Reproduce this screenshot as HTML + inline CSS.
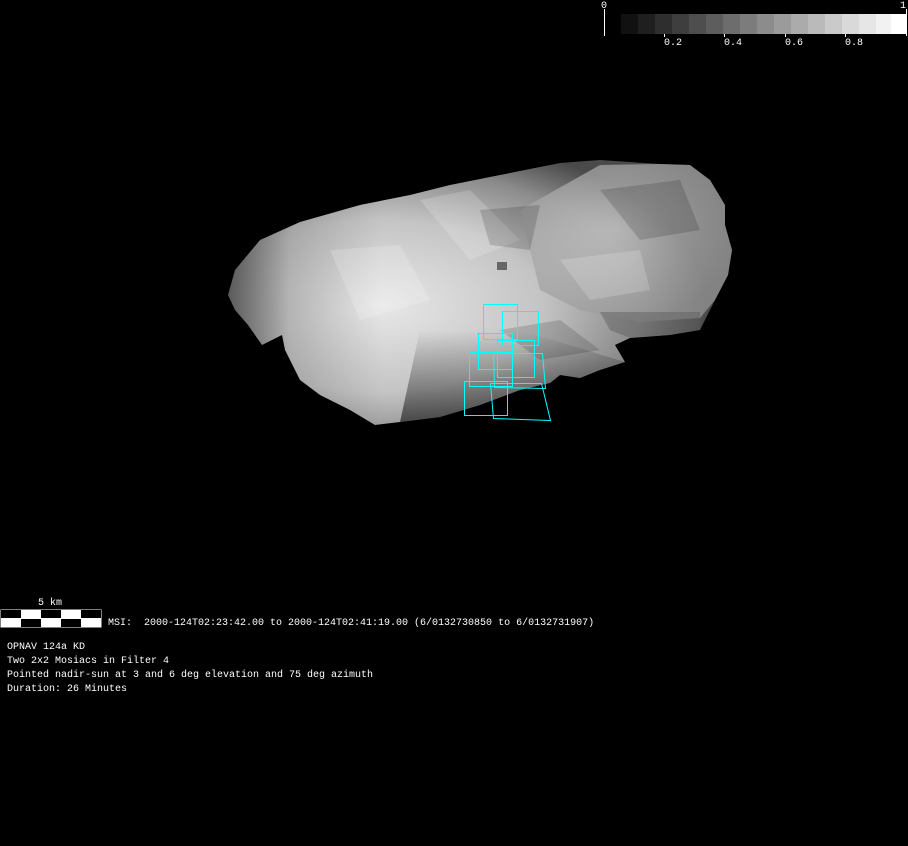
<!DOCTYPE html>
<html><head><style>
html,body{margin:0;padding:0;background:#000;width:908px;height:846px;overflow:hidden}
.t{position:absolute;color:#fff;font-family:"Liberation Mono",monospace;font-size:10px;line-height:14px;white-space:pre}
</style></head><body>
<svg width="908" height="846" style="position:absolute;left:0;top:0">
<defs>
<radialGradient id="g1" cx="0.3" cy="0.55" r="0.65">
<stop offset="0" stop-color="#e8e8e8"/><stop offset="0.5" stop-color="#c4c4c4"/><stop offset="0.8" stop-color="#8a8a8a"/><stop offset="1" stop-color="#4a4a4a"/>
</radialGradient>
<radialGradient id="g2" cx="0.45" cy="0.4" r="0.6">
<stop offset="0" stop-color="#cfcfcf"/><stop offset="0.7" stop-color="#a8a8a8"/><stop offset="1" stop-color="#9a9a9a"/>
</radialGradient>
<linearGradient id="g3" x1="0" y1="0" x2="0" y2="1">
<stop offset="0" stop-color="#000" stop-opacity="0"/><stop offset="1" stop-color="#000" stop-opacity="0.55"/>
</linearGradient>
<linearGradient id="g4" x1="0" y1="0" x2="1" y2="0">
<stop offset="0" stop-color="#000" stop-opacity="0.55"/><stop offset="0.12" stop-color="#000" stop-opacity="0.15"/><stop offset="0.3" stop-color="#000" stop-opacity="0"/>
</linearGradient>
</defs>
<polygon fill="url(#g1)" points="235,270 260,240 300,222 360,205 410,195 450,185 500,175 560,163 600,160 660,164 690,165 710,180 725,205 725,225 732,250 728,275 715,300 700,330 670,335 630,338 615,345 625,362 600,370 580,378 560,375 550,383 520,390 480,405 440,417 400,422 375,425 350,410 320,395 300,380 285,350 282,335 262,345 248,325 235,310 228,295"/>
<polygon fill="url(#g2)" opacity="0.7" points="520,210 600,165 660,164 690,165 710,180 725,205 725,225 732,250 728,275 715,300 700,318 640,322 580,310 540,290"/>
<polygon fill="#5a5a5a" opacity="0.45" points="600,312 700,312 700,330 670,335 630,338 610,330"/>
<polygon fill="url(#g3)" points="420,330 520,330 625,362 600,370 580,378 560,375 550,383 520,390 480,405 440,417 400,422"/>
<polygon fill="url(#g4)" points="228,180 740,180 740,430 228,430"/>
<g fill="#fff" opacity="0.18">
<polygon points="330,250 400,245 430,300 360,320"/>
<polygon points="420,200 470,190 520,240 470,260"/>
<polygon points="560,260 640,250 650,290 590,300"/>
</g>
<g fill="#000" opacity="0.15">
<polygon points="480,210 540,205 530,250 490,245"/>
<polygon points="600,190 680,180 700,230 640,240"/>
<polygon points="500,330 560,320 600,350 540,360"/>
</g>
<rect x="497" y="262" width="10" height="8" fill="#666"/>
<g fill="none" stroke="#00ffff" stroke-width="1">
<rect x="483.5" y="304.5" width="34" height="35"/>
<rect x="502.5" y="311.5" width="36" height="34"/>
<rect x="478.5" y="333.5" width="34" height="36"/>
<rect x="497.5" y="340.5" width="37" height="37"/>
<rect x="469.5" y="352.5" width="43" height="34"/>
<polygon points="493.5,353.5 542.5,353.5 545.5,388.5 494.5,387.5"/>
<rect x="464.5" y="381.5" width="43" height="34"/>
<polygon points="490.5,383.5 541.5,383.5 550.5,420.5 493.5,418.5"/>
</g>
<g>
<rect x="621" y="14" width="17" height="20" fill="#111"/>
<rect x="638" y="14" width="17" height="20" fill="#1f1f1f"/>
<rect x="655" y="14" width="17" height="20" fill="#2e2e2e"/>
<rect x="672" y="14" width="17" height="20" fill="#3e3e3e"/>
<rect x="689" y="14" width="17" height="20" fill="#4e4e4e"/>
<rect x="706" y="14" width="17" height="20" fill="#5d5d5d"/>
<rect x="723" y="14" width="17" height="20" fill="#6d6d6d"/>
<rect x="740" y="14" width="17" height="20" fill="#7c7c7c"/>
<rect x="757" y="14" width="17" height="20" fill="#8c8c8c"/>
<rect x="774" y="14" width="17" height="20" fill="#9b9b9b"/>
<rect x="791" y="14" width="17" height="20" fill="#ababab"/>
<rect x="808" y="14" width="17" height="20" fill="#bababa"/>
<rect x="825" y="14" width="17" height="20" fill="#cacaca"/>
<rect x="842" y="14" width="17" height="20" fill="#d9d9d9"/>
<rect x="859" y="14" width="17" height="20" fill="#e6e6e6"/>
<rect x="876" y="14" width="15" height="20" fill="#f2f2f2"/>
<rect x="891" y="14" width="16" height="20" fill="#fff"/>
<line x1="604.5" y1="9" x2="604.5" y2="36" stroke="#fff"/>
<line x1="906.5" y1="9" x2="906.5" y2="36" stroke="#fff"/>
<line x1="664.5" y1="34" x2="664.5" y2="37" stroke="#fff"/>
<line x1="724.5" y1="34" x2="724.5" y2="37" stroke="#fff"/>
<line x1="785.5" y1="34" x2="785.5" y2="37" stroke="#fff"/>
<line x1="845.5" y1="34" x2="845.5" y2="37" stroke="#fff"/>
</g>
<rect x="0.5" y="609.5" width="101" height="18" fill="#fff"/>
<rect x="1" y="610" width="20" height="8" fill="#000"/>
<rect x="41" y="610" width="20" height="8" fill="#000"/>
<rect x="81" y="610" width="20" height="8" fill="#000"/>
<rect x="21" y="619" width="20" height="8" fill="#000"/>
<rect x="61" y="619" width="20" height="8" fill="#000"/>
</svg>
<div class="t" style="left:601px;top:0px">0</div>
<div class="t" style="left:900px;top:0px">1</div>
<div class="t" style="left:664px;top:37px">0.2</div>
<div class="t" style="left:724px;top:37px">0.4</div>
<div class="t" style="left:785px;top:37px">0.6</div>
<div class="t" style="left:845px;top:37px">0.8</div>
<div class="t" style="left:38px;top:597px">5 km</div>
<div class="t" style="left:108px;top:617px">MSI:  2000-124T02:23:42.00 to 2000-124T02:41:19.00 (6/0132730850 to 6/0132731907)</div>
<div class="t" style="left:7px;top:641px">OPNAV 124a KD
Two 2x2 Mosiacs in Filter 4
Pointed nadir-sun at 3 and 6 deg elevation and 75 deg azimuth
Duration: 26 Minutes</div>
</body></html>
